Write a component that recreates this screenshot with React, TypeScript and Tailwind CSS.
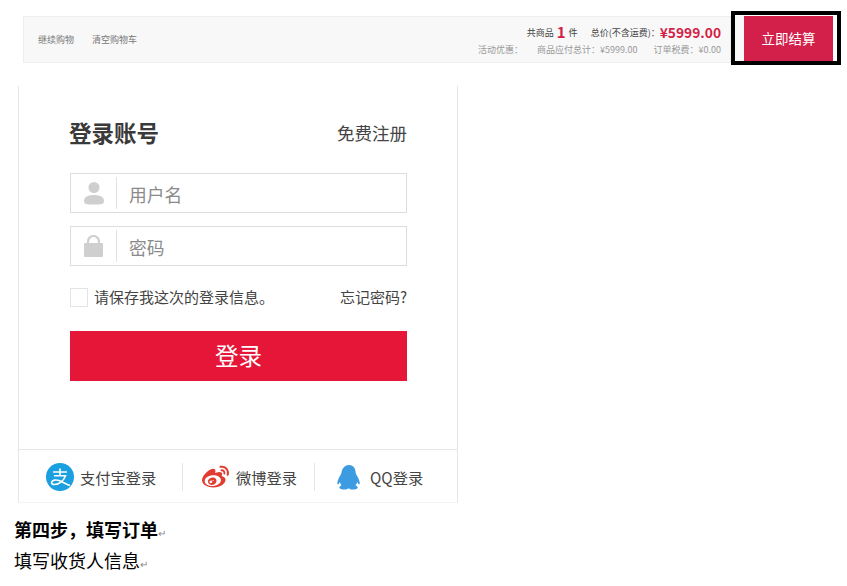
import React from 'react'
import { FaWeibo } from 'react-icons/fa'

const font = { cjk: 'font-["Noto_Sans_CJK_SC","Liberation_Sans",sans-serif]' }
const COLON = '\uFF1A'
const COMMA = '\uFF0C'

function AlipayIcon (): React.ReactElement {
  return (
    <svg width="28" height="28" viewBox="0 0 28 28">
      <circle cx="14" cy="14" r="14" fill="#1a9fe0" />
      <path d="M7 9h14M14 5.500v7M8 12.800h11.500c-1.500 4.700-6 8.400-11 8.700-2.300 0-3.200-1-2.800-2.400.6-1.900 4-2.800 7.300-1.500 3 1.200 7 3.400 11 5" fill="none" stroke="#fff" strokeWidth="1.600" />
    </svg>
  )
}

function QqIcon (): React.ReactElement {
  return (
    <svg width="24" height="25" viewBox="0 0 24 25" fill="#3d9be2">
      <path d="M12 0c4.200 0 6.300 3 6.500 6.500.1 1.600.4 2.400 1.200 3.800 1.400 2.200 2.600 4.700 3 7.200.3 1.800-.5 2.400-1.500 1.200-.5-.6-.8-1-1.100-1.600-.2 1.400-.8 2.400-1.500 3.100 1 .5 2.100 1.200 2.100 2.200 0 1.400-2.500 2.100-5 2.100-1.800 0-3.300-.5-3.700-1h-.9c-.4.500-1.900 1-3.700 1-2.500 0-5-.7-5-2.100 0-1 1.100-1.700 2.100-2.200-.7-.7-1.300-1.700-1.500-3.100-.3.600-.6 1-1.100 1.600-1 1.200-1.800.6-1.500-1.200.4-2.500 1.600-5 3-7.200.8-1.400 1.100-2.200 1.200-3.800C5.700 3 7.800 0 12 0z" />
    </svg>
  )
}

function UserIcon (): React.ReactElement {
  return (
    <svg width="20" height="23" viewBox="0 0 20 23" fill="#cfcfcf">
      <circle cx="10" cy="5.500" r="5.500" />
      <path d="M0 19c0-4 4-6 10-6s10 2 10 6c0 3-2 3.500-10 3.500S0 22 0 19z" />
    </svg>
  )
}

function LockIcon (): React.ReactElement {
  return (
    <svg width="19" height="22" viewBox="0 0 19 22" fill="#cfcfcf">
      <path d="M4 10V6.500a5.500 5.500 0 0 1 11 0V10" fill="none" stroke="#cfcfcf" strokeWidth="2.200" />
      <rect x="0" y="8" width="19" height="14" rx="1" />
    </svg>
  )
}

function LoginField ({ icon, placeholder }: { icon: React.ReactNode, placeholder: string }): React.ReactElement {
  return (
    <div className="flex h-10 w-[337px] items-center border border-[#dddddd] bg-white">
      <div className="flex h-8 w-[46px] shrink-0 items-center justify-center border-r border-[#e2e2e2]">{icon}</div>
      <span className="pl-3 pt-[2px] text-[17.750px] text-[#8a8a8a]">{placeholder}</span>
    </div>
  )
}

function SocialLogin ({ icon, label, className }: { icon: React.ReactNode, label: string, className: string }): React.ReactElement {
  return (
    <div className={`flex h-7 items-center ${className}`}>
      {icon}
      <span className="text-[15.250px] text-[#444444]">{label}</span>
    </div>
  )
}

function ReturnMark (): React.ReactElement {
  return <span className="text-[10px] font-normal leading-none text-[#8a8a8a]">↵</span>
}

export default function App (): React.ReactElement {
  return (
    <div className={`h-[586px] w-[847px] overflow-hidden bg-white ${font.cjk}`}>
      {/* 顶部购物车栏 */}
      <div className="flex pl-[23px] pt-[11px]">
        <div className="mt-[5px] flex h-[47px] w-[708px] items-center justify-between border border-[#eeeeee] bg-[#f8f8f8] pl-[14px] pr-[9px]">
          <div className="flex gap-[18px] text-[9px] text-[#777777]">
            <span>继续购物</span>
            <span>清空购物车</span>
          </div>
          <div className="flex flex-col items-end">
            <div className="flex h-[21px] items-center text-[9px] text-[#444444]">
              <span>共商品</span>
              <span className="mx-[3px] text-[15px] font-bold text-[#d31f47]">1</span>
              <span>件</span>
              <span className="ml-[13px]">总价(不含运费){COLON}</span>
              <span className="text-[13.750px] font-bold text-[#d31f47]">¥5999.00</span>
            </div>
            <div className="flex h-[14px] items-center text-[9px] text-[#999999]">
              <span>活动优惠{COLON}</span>
              <span className="ml-[14px]">商品应付总计{COLON}¥5999.00</span>
              <span className="ml-[16px]">订单税费{COLON}¥0.00</span>
            </div>
          </div>
        </div>
        <div className="h-[54px] w-[110px] border-4 border-black bg-white">
          <div className="flex h-[46px] pt-[1px]">
            <div className="w-[9px] bg-[#f8f8f8]" />
            <div className="flex w-[89px] items-center justify-center bg-[#d2204a] text-[13.500px] text-white">立即结算</div>
          </div>
        </div>
      </div>

      {/* 登录卡片 */}
      <div className="ml-[18px] mt-[21px] h-[417px] w-[440px] border-x border-b border-[#e6e6e6] border-b-[#f4f4f4]">
        <div className="h-[363px] pl-[50px] pr-[50px] pt-[31px]">
          <div className="flex h-[32px] items-center justify-between">
            <h1 className="text-[22.500px] font-bold text-[#3a3a3a]">登录账号</h1>
            <a className="text-[17.500px] text-[#444444]">免费注册</a>
          </div>
          <div className="ml-[1px] mt-[24px] flex flex-col gap-[13px]">
            <LoginField icon={<UserIcon />} placeholder="用户名" />
            <LoginField icon={<LockIcon />} placeholder="密码" />
          </div>
          <div className="ml-[1px] mt-[22px] flex h-[19px] items-center justify-between">
            <label className="flex items-center text-[15px] text-[#444444]">
              <span className="mr-[6px] h-[19px] w-[18px] border border-[#e4e4e4]" />
              <span>请保存我这次的登录信息。</span>
            </label>
            <a className="text-[15px] text-[#444444]">忘记密码?</a>
          </div>
          <button className="ml-[1px] mt-[24px] h-[50px] w-[337px] bg-[#e61638] pb-[1px] text-[23.500px] text-white">登录</button>
        </div>
        <div className="flex h-[53px] items-center border-t border-[#e6e6e6] pt-[2px]">
          <SocialLogin className="w-[164px] border-r border-[#e6e6e6] pl-[27px]" icon={<span className="mr-[6px] flex"><AlipayIcon /></span>} label="支付宝登录" />
          <SocialLogin className="w-[132px] border-r border-[#e6e6e6] pl-[19px]" icon={<FaWeibo className="mr-[7px] text-[#e23c30]" size={27} />} label="微博登录" />
          <SocialLogin className="pl-[22px]" icon={<span className="mr-[9px] flex"><QqIcon /></span>} label="QQ登录" />
        </div>
      </div>

      {/* 文档正文 */}
      <div className="pl-[14px] pt-[11px] text-[18px] leading-[31px] text-black">
        <p className="font-bold">第四步{COMMA}填写订单<ReturnMark /></p>
        <p>填写收货人信息<ReturnMark /></p>
      </div>
    </div>
  )
}
